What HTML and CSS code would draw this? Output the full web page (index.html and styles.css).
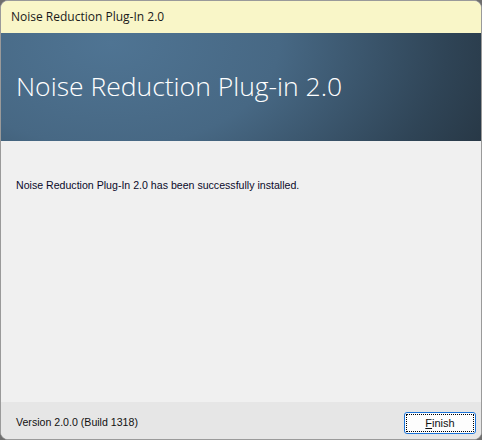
FILE: index.html
```html
<!DOCTYPE html>
<html>
<head>
<meta charset="utf-8">
<link rel="stylesheet" href="styles.css">
</head>
<body>
<div class="window">
  <div class="titlebar">Noise Reduction Plug-In 2.0</div>
  <div class="banner"><h1 class="banner-title">Noise Reduction Plug-in 2.0</h1></div>
  <div class="content">
    <p class="message">Noise Reduction Plug-In 2.0 has been successfully installed.</p>
  </div>
  <div class="footer">
    <span class="version">Version 2.0.0 (Build 1318)</span>
    <button class="btn"><span class="focus"><u>F</u>inish</span></button>
  </div>
</div>
</body>
</html>
```
FILE: styles.css
```css
html, body {
  margin: 0;
  padding: 0;
  background: #6e6e6e;
}
body {
  width: 482px;
  height: 440px;
  overflow: hidden;
}
.window {
  width: 480px;
  height: 438px;
  border: 1px solid #9a9a9a;
  border-radius: 8px;
  overflow: hidden;
  display: flex;
  flex-direction: column;
  background: #f0f0f0;
}
.titlebar {
  height: 32px;
  flex: none;
  background: #f9f6c8;
  font-family: "Open Sans", "Noto Sans", sans-serif;
  font-size: 12px;
  color: #1a1a1a;
  padding-left: 10px;
  line-height: 32px;
}
.banner {
  height: 108px;
  flex: none;
  background: radial-gradient(ellipse 420px 260px at 110px 10px, #4f7493 0%, #476884 40%, #2f4456 80%, #263542 100%);
  display: flex;
  align-items: center;
  padding-left: 15px;
}
.banner-title {
  margin: 0;
  font-family: "Open Sans", "Noto Sans", sans-serif;
  font-weight: 300;
  font-size: 26.5px;
  color: #ffffff;
  padding-bottom: 2px;
}
.content {
  flex: 1;
  padding: 38px 15px 0;
}
.message {
  margin: 0;
  font-family: "Liberation Sans", Arial, sans-serif;
  font-size: 10.6px;
  color: #0a0a2a;
}
.footer {
  height: 37px;
  flex: none;
  background: #e6e6e6;
  display: flex;
  align-items: center;
  justify-content: space-between;
  padding: 0 5px 0 15px;
}
.version {
  font-family: "Liberation Sans", Arial, sans-serif;
  font-size: 10.6px;
  color: #111;
  margin-top: 2px;
}
.btn {
  width: 72px;
  height: 22px;
  padding: 1px;
  border: 1px solid #1a73d8;
  border-radius: 3px;
  background: #fdfdfd;
  font-family: "Liberation Sans", Arial, sans-serif;
  font-size: 11px;
  color: #111;
  display: flex;
  margin-top: 5px;
}
.focus {
  flex: 1;
  border: 1px dotted #000;
  display: flex;
  align-items: center;
  justify-content: center;
}
```
